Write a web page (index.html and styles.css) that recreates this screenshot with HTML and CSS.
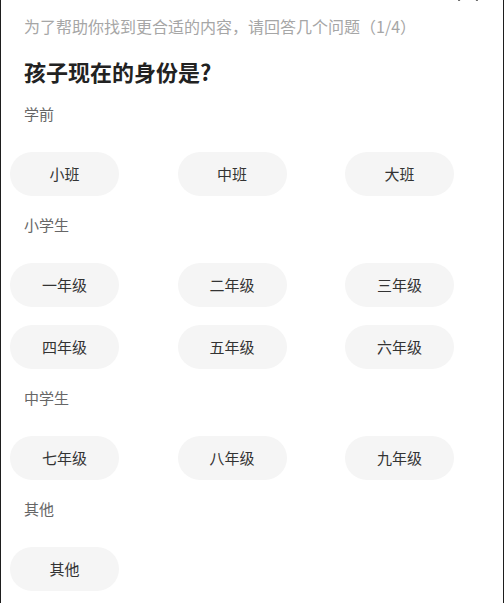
FILE: index.html
```html
<!DOCTYPE html>
<html lang="zh-CN">
<head>
<meta charset="utf-8">
<title>身份选择</title>
<link rel="stylesheet" href="styles.css">
</head>
<body>
<div class="page">
  <svg class="close" width="24" height="24" viewBox="0 0 24 24" aria-hidden="true">
    <path d="M3 3 L21 21 M21 3 L3 21" stroke="#555" stroke-width="2" stroke-linecap="round" fill="none"/>
  </svg>
  <p class="subtitle">为了帮助你找到更合适的内容，请回答几个问题（1/4）</p>
  <h1 class="title">孩子现在的身份是?</h1>

  <div class="section">
    <div class="label">学前</div>
    <div class="options">
      <div class="pill">小班</div>
      <div class="pill">中班</div>
      <div class="pill">大班</div>
    </div>
  </div>

  <div class="section">
    <div class="label">小学生</div>
    <div class="options">
      <div class="pill">一年级</div>
      <div class="pill">二年级</div>
      <div class="pill">三年级</div>
      <div class="pill">四年级</div>
      <div class="pill">五年级</div>
      <div class="pill">六年级</div>
    </div>
  </div>

  <div class="section">
    <div class="label">中学生</div>
    <div class="options">
      <div class="pill">七年级</div>
      <div class="pill">八年级</div>
      <div class="pill">九年级</div>
    </div>
  </div>

  <div class="section">
    <div class="label">其他</div>
    <div class="options">
      <div class="pill">其他</div>
    </div>
  </div>
</div>
</body>
</html>
```

FILE: styles.css
```css
html, body {
  margin: 0;
  padding: 0;
  background: #ffffff;
}
body {
  font-family: "Noto Sans CJK SC", "Noto Sans", sans-serif;
}
.page {
  position: relative;
  box-sizing: border-box;
  width: 504px;
  height: 603px;
  overflow: hidden;
  border-left: 1px solid #1e1e1e;
  border-right: 1px solid #1e1e1e;
  padding-top: 15px;
}
.close {
  position: absolute;
  top: -21px;
  left: 455px;
}
.subtitle {
  margin: 0 0 0 23px;
  font-size: 16px;
  line-height: 22px;
  color: #a6a6a6;
}
.title {
  margin: 19px 0 0 23px;
  font-size: 22px;
  line-height: 30px;
  font-weight: 700;
  color: #222222;
}
.section {
  display: flex;
  flex-direction: column;
}
.section + .section .label {
  margin-top: 18px;
}
.label {
  margin: 17px 0 0 23px;
  font-size: 15px;
  line-height: 22px;
  color: #666666;
}
.options {
  display: grid;
  grid-template-columns: repeat(3, 109px);
  column-gap: 58.5px;
  row-gap: 18px;
  margin-top: 27px;
  padding-left: 9px;
}
.pill {
  box-sizing: border-box;
  height: 44px;
  padding-bottom: 1px;
  border-radius: 22px;
  background: #f5f5f5;
  display: flex;
  align-items: center;
  justify-content: center;
  font-size: 15px;
  color: #333333;
}
```
